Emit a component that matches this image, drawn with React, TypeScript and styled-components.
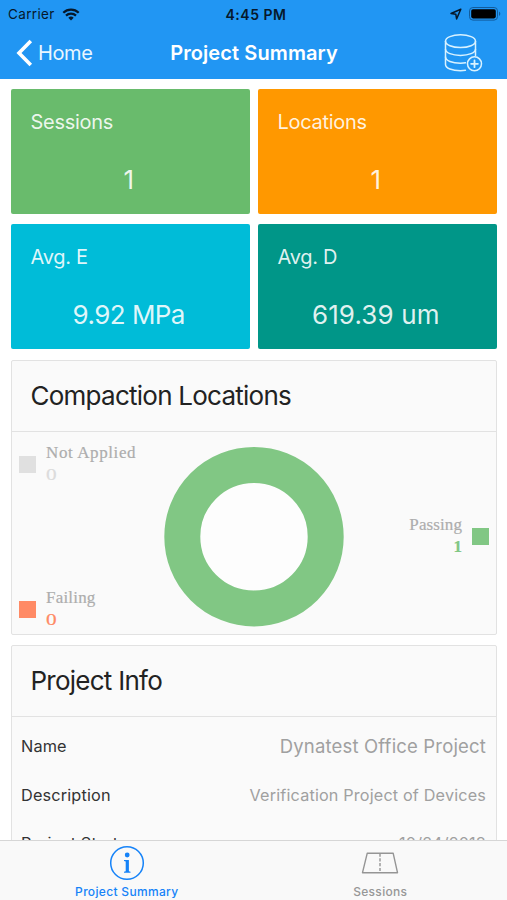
import React from "react";
import styled, { createGlobalStyle } from "styled-components";

const GlobalStyle = createGlobalStyle`
  * { box-sizing: border-box; }
  body { margin: 0; background: #fff; font-family: Inter, "Liberation Sans", sans-serif; }
`;

const Screen = styled.div`
  display: flex;
  flex-direction: column;
  width: 507px;
  height: 900px;
  overflow: hidden;
  background: #fff;
`;

const Header = styled.header`
  flex: none;
  height: 79px;
  background: #2196f3;
`;

const StatusBar = styled.div`
  display: grid;
  grid-template-columns: 1fr auto 1fr;
  align-items: center;
  height: 27px;
  padding: 0 6px 0 8px;
  color: #06182b;
  font-size: 13.5px;
`;

const StatusGroup = styled.div<{ $end?: boolean }>`
  display: flex;
  align-items: center;
  justify-content: ${(p) => (p.$end ? "flex-end" : "flex-start")};
  gap: 7px;
  line-height: 28px;
  letter-spacing: 0.35px;
`;

const Clock = styled.div`
  font-weight: 600;
  font-size: 14px;
  line-height: 27px;
  letter-spacing: 0.5px;
  padding-left: 3px;
`;

const NavBar = styled.div`
  display: grid;
  grid-template-columns: 1fr auto 1fr;
  align-items: center;
  height: 52px;
  padding: 0 15px 0 16px;
  color: #fff;
`;

const BackButton = styled.div`
  display: flex;
  align-items: center;
  gap: 5px;
  font-size: 20px;
  line-height: 50px;
  letter-spacing: -0.4px;
  color: #e9f6ff;
`;

const NavTitle = styled.h1`
  margin: 0;
  font-size: 20px;
  line-height: 50px;
  font-weight: 600;
  letter-spacing: 0.1px;
`;

const NavAction = styled.div`
  display: flex;
  justify-content: flex-end;
  padding-right: 9px;
`;

const Content = styled.main`
  flex: 1;
  min-height: 0;
  overflow: hidden;
  padding: 10px 10px 0 11px;
`;

const Tiles = styled.div`
  display: grid;
  grid-template-columns: 239px 239px;
  grid-auto-rows: 125px;
  gap: 10px 8px;
  margin-bottom: 11px;
`;

const Tile = styled.section<{ $color: string }>`
  background: ${(p) => p.$color};
  border-radius: 2px;
  padding: 19px 20px 0 19.5px;
  color: rgba(255, 255, 255, 0.88);
`;

const TileLabel = styled.div`
  font-size: 20px;
  line-height: 28px;
  letter-spacing: -0.3px;
`;

const TileValue = styled.div<{ $spacing: number }>`
  margin-top: 27px;
  font-size: 26px;
  line-height: 34px;
  letter-spacing: ${(p) => p.$spacing}px;
  text-align: center;
  padding-right: 3px;
`;

const Panel = styled.section`
  margin-bottom: 10px;
  border: 1px solid #e2e2e2;
  border-radius: 2px;
  background: #fafafa;
`;

const PanelTitle = styled.h2`
  margin: 0;
  height: 71px;
  padding-left: 18.5px;
  border-bottom: 1px solid #e2e2e2;
  font-size: 26px;
  line-height: 70px;
  font-weight: 400;
  letter-spacing: -0.75px;
  color: #222;
`;

const ChartArea = styled.div`
  display: grid;
  grid-template-columns: 152px 180px 1fr;
  height: 202px;
  padding-top: 15px;
  padding-right: 7px;
`;

const LegendColumn = styled.div`
  display: flex;
  flex-direction: column;
  justify-content: space-between;
  height: 189px;
  margin-top: -5px;
  padding-left: 7px;
`;

const LegendRight = styled.div`
  display: flex;
  justify-content: flex-end;
  align-items: center;
  height: 178px;
`;

const LegendItem = styled.div<{ $reverse?: boolean }>`
  display: flex;
  flex-direction: ${(p) => (p.$reverse ? "row-reverse" : "row")};
  align-items: center;
  gap: 10px;
  text-align: ${(p) => (p.$reverse ? "right" : "left")};
`;

const Swatch = styled.span<{ $color: string }>`
  width: 17px;
  height: 17px;
  background: ${(p) => p.$color};
`;

const LegendText = styled.div<{ $spacing?: number }>`
  font-family: "Liberation Serif", serif;
  font-size: 17px;
  line-height: 22px;
  letter-spacing: ${(p) => p.$spacing ?? 0}px;
  color: #adadad;
  -webkit-text-stroke: 0.2px currentColor;
`;

const LegendValue = styled.div<{ $color: string; $bold?: boolean }>`
  color: ${(p) => p.$color};
  font-size: 17px;
  font-weight: ${(p) => (p.$bold ? 700 : 400)};
  transform: ${(p) => (p.$bold ? "none" : "scaleX(1.25)")};
  transform-origin: left;
`;

const InfoList = styled.div`
  padding: 5px 10px 0 9px;
`;

const InfoRow = styled.div`
  display: flex;
  justify-content: space-between;
  height: 49px;
  line-height: 49px;

  &:last-child {
    line-height: 46px;
  }
`;

const InfoLabel = styled.span`
  font-size: 16.3px;
  letter-spacing: 0.15px;
  color: #333;
`;

const InfoValue = styled.span<{ $large?: boolean }>`
  font-size: ${(p) => (p.$large ? "18.5px" : "16.2px")};
  letter-spacing: 0.17px;
  color: #a0a0a0;
`;

const TabBar = styled.nav`
  flex: none;
  display: grid;
  grid-template-columns: 1fr 1fr;
  height: 60px;
  border-top: 1px solid #d6d6d6;
  background: #f9f9f9;
`;

const Tab = styled.div<{ $active?: boolean }>`
  display: flex;
  flex-direction: column;
  align-items: center;
  padding-top: 4px;
  color: ${(p) => (p.$active ? "#1683f8" : "#979797")};
  font-size: 12px;
  font-weight: 500;
  letter-spacing: 0.32px;
  line-height: 16px;
`;

const TabIcon = styled.div`
  display: flex;
  align-items: center;
  height: 36px;
  margin-bottom: 3px;
`;

const WifiIcon = () => (
  <svg width="18" height="13" viewBox="0 0 18 13" fill="none" stroke="#06182b" strokeWidth="2.2">
    <path d="M1.3 4.7a11 11 0 0 1 15.4 0" />
    <path d="M4 7.6a7.1 7.1 0 0 1 10 0" />
    <path d="M9 12.4 6.3 9.7a3.9 3.9 0 0 1 5.4 0z" fill="#06182b" stroke="none" />
  </svg>
);

const LocationIcon = () => (
  <svg width="12" height="12" viewBox="0 0 12 12" fill="none" stroke="#06182b" strokeWidth="1.5" strokeLinejoin="round">
    <path d="M10.8 1.2 1 5.5l4.8.7.8 4.7z" />
  </svg>
);

const BatteryIcon = () => (
  <svg width="32" height="14" viewBox="0 0 32 14">
    <rect x="0.5" y="0.5" width="28" height="12.6" rx="3.4" fill="none" stroke="#125c9c" />
    <rect x="2.2" y="2.2" width="24.6" height="9.2" rx="1.8" fill="#000" />
    <path d="M30 4.6c1.8.7 1.8 3.7 0 4.4z" fill="#125c9c" />
  </svg>
);

const ChevronIcon = () => (
  <svg width="17" height="28" viewBox="0 0 17 28" fill="none" stroke="#fff" strokeWidth="3.6">
    <path d="M14.8 2 3 14l11.8 12" />
  </svg>
);

const DatabaseIcon = () => (
  <svg width="39" height="40" viewBox="0 0 39 40" fill="none" stroke="#d9f2ff" strokeWidth="1.5" strokeLinecap="round">
    <ellipse cx="16.5" cy="8.2" rx="15" ry="6.4" />
    <path d="M1.5 8.2v23.3c0 3.7 6.7 6.2 15 6.2 1.8 0 3.4-.1 4.9-.4M31.5 8.2v14.2" />
    <path d="M1.5 16.2c0 3.6 6.7 6.2 15 6.2s15-2.6 15-6.2" />
    <path d="M1.5 24c0 3.6 6.7 6.2 15 6.2 1.8 0 3.6-.1 5-.4" />
    <circle cx="30.5" cy="30.8" r="7" />
    <path d="M30.5 27.4v6.8M27.1 30.8h6.8" strokeWidth="1.8" />
  </svg>
);

const Donut = () => (
  <svg width="180" height="180" viewBox="0 0 180 180">
    <circle cx="90" cy="89.7" r="54" fill="#fdfdfd" />
    <circle cx="90" cy="89.7" r="71.7" fill="none" stroke="#81c784" strokeWidth="36" />
  </svg>
);

const InfoIcon = () => (
  <svg width="36" height="36" viewBox="0 0 36 36" fill="#1683f8">
    <circle cx="18" cy="18" r="16.3" fill="none" stroke="#1683f8" strokeWidth="1.5" />
    <circle cx="18.2" cy="10" r="2.4" />
    <path d="M15 15h4.9v11.2l1.6.5v1.1H15v-1.1l1.7-.5v-9.6l-1.7-.5z" />
  </svg>
);

const RoadIcon = () => (
  <svg width="38" height="22" viewBox="0 0 38 22" fill="none" stroke="#959595" strokeWidth="1.4">
    <path d="M6.2 1.3h26L36.5 20.7h-35z" strokeLinejoin="round" />
    <path d="M19 1.5v19" strokeDasharray="3.2 1.6" />
  </svg>
);

const tiles = [
  { label: "Sessions", value: "1", color: "#69bb6c", spacing: 0 },
  { label: "Locations", value: "1", color: "#ff9800", spacing: 0 },
  { label: "Avg. E", value: "9.92 MPa", color: "#00bcd8", spacing: -0.55 },
  { label: "Avg. D", value: "619.39 um", color: "#009688", spacing: 0.12 },
];

export default function App() {
  return (
    <Screen>
      <GlobalStyle />
      <Header>
        <StatusBar>
          <StatusGroup>Carrier <WifiIcon /></StatusGroup>
          <Clock>4:45 PM</Clock>
          <StatusGroup $end><LocationIcon /><BatteryIcon /></StatusGroup>
        </StatusBar>
        <NavBar>
          <BackButton><ChevronIcon />Home</BackButton>
          <NavTitle>Project Summary</NavTitle>
          <NavAction><DatabaseIcon /></NavAction>
        </NavBar>
      </Header>
      <Content>
        <Tiles>
          {tiles.map((t) => (
            <Tile key={t.label} $color={t.color}>
              <TileLabel>{t.label}</TileLabel>
              <TileValue $spacing={t.spacing}>{t.value}</TileValue>
            </Tile>
          ))}
        </Tiles>
        <Panel>
          <PanelTitle>Compaction Locations</PanelTitle>
          <ChartArea>
            <LegendColumn>
              <LegendItem>
                <Swatch $color="#e0e0e0" />
                <LegendText $spacing={0.6}>Not Applied<LegendValue $color="#dcdcdc">0</LegendValue></LegendText>
              </LegendItem>
              <LegendItem>
                <Swatch $color="#ff8a65" />
                <LegendText $spacing={0.2}>Failing<LegendValue $color="#ff8a65">0</LegendValue></LegendText>
              </LegendItem>
            </LegendColumn>
            <Donut />
            <LegendRight>
              <LegendItem $reverse>
                <Swatch $color="#81c784" />
                <LegendText $spacing={0.1}>Passing<LegendValue $color="#81c784" $bold>1</LegendValue></LegendText>
              </LegendItem>
            </LegendRight>
          </ChartArea>
        </Panel>
        <Panel>
          <PanelTitle>Project Info</PanelTitle>
          <InfoList>
            <InfoRow><InfoLabel>Name</InfoLabel><InfoValue $large>Dynatest Office Project</InfoValue></InfoRow>
            <InfoRow><InfoLabel>Description</InfoLabel><InfoValue>Verification Project of Devices</InfoValue></InfoRow>
            <InfoRow><InfoLabel>Project Start</InfoLabel><InfoValue>10/24/2018</InfoValue></InfoRow>
          </InfoList>
        </Panel>
      </Content>
      <TabBar>
        <Tab $active><TabIcon><InfoIcon /></TabIcon>Project Summary</Tab>
        <Tab><TabIcon><RoadIcon /></TabIcon>Sessions</Tab>
      </TabBar>
    </Screen>
  );
}
